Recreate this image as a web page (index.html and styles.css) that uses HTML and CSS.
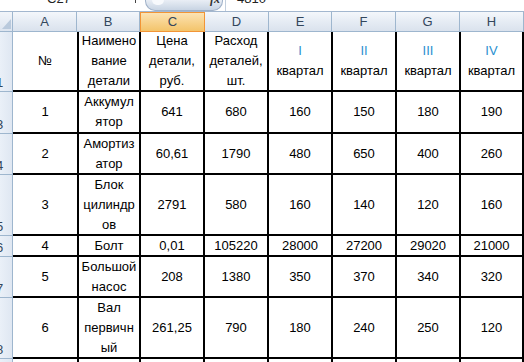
FILE: index.html
```html
<!DOCTYPE html>
<html lang="ru">
<head>
<meta charset="utf-8">
<title>Детали</title>
<link rel="stylesheet" href="styles.css">
</head>
<body>
<div class="topbar">
  <div class="namebox"><span class="cut">C27</span></div>
  <span class="tick"></span>
  <div class="fxpill"><span class="hl"></span><span class="fx">fx</span></div>
  <div class="value"><span class="cut">4810</span></div>
</div>
<div class="colheads">
  <div class="corner"><span class="tri"></span></div>
  <div class="ch w64">A</div>
  <div class="ch w63">B</div>
  <div class="ch w65 sel">C</div>
  <div class="ch w64">D</div>
  <div class="ch w63">E</div>
  <div class="ch w64">F</div>
  <div class="ch w64">G</div>
  <div class="ch w64">H</div>
</div>
<div class="sheet">
  <div class="rowheads">
    <div class="rh r60"><span>1</span></div>
    <div class="rh r42"><span>3</span></div>
    <div class="rh r41"><span>4</span></div>
    <div class="rh r61"><span>5</span></div>
    <div class="rh r21"><span>6</span></div>
    <div class="rh r41"><span>7</span></div>
    <div class="rh r61"><span>8</span></div>
    <div class="rh r20"><span></span></div>
  </div>
  <div class="grid">
    <div class="c">№</div>
    <div class="c">Наимено<br>вание<br>детали</div>
    <div class="c">Цена<br>детали,<br>руб.</div>
    <div class="c">Расход<br>деталей,<br>шт.</div>
    <div class="c"><span class="q">I</span>квартал</div>
    <div class="c"><span class="q">II</span>квартал</div>
    <div class="c"><span class="q">III</span>квартал</div>
    <div class="c"><span class="q">IV</span>квартал</div>

    <div class="c">1</div>
    <div class="c">Аккумул<br>ятор</div>
    <div class="c">641</div>
    <div class="c">680</div>
    <div class="c">160</div>
    <div class="c">150</div>
    <div class="c">180</div>
    <div class="c">190</div>

    <div class="c">2</div>
    <div class="c">Амортиз<br>атор</div>
    <div class="c">60,61</div>
    <div class="c">1790</div>
    <div class="c">480</div>
    <div class="c">650</div>
    <div class="c">400</div>
    <div class="c">260</div>

    <div class="c">3</div>
    <div class="c">Блок<br>цилиндр<br>ов</div>
    <div class="c">2791</div>
    <div class="c">580</div>
    <div class="c">160</div>
    <div class="c">140</div>
    <div class="c">120</div>
    <div class="c">160</div>

    <div class="c">4</div>
    <div class="c">Болт</div>
    <div class="c">0,01</div>
    <div class="c">105220</div>
    <div class="c">28000</div>
    <div class="c">27200</div>
    <div class="c">29020</div>
    <div class="c">21000</div>

    <div class="c">5</div>
    <div class="c">Большой<br>насос</div>
    <div class="c">208</div>
    <div class="c">1380</div>
    <div class="c">350</div>
    <div class="c">370</div>
    <div class="c">340</div>
    <div class="c">320</div>

    <div class="c">6</div>
    <div class="c">Вал<br>первичн<br>ый</div>
    <div class="c">261,25</div>
    <div class="c">790</div>
    <div class="c">180</div>
    <div class="c">240</div>
    <div class="c">250</div>
    <div class="c">120</div>

    <div class="c"></div>
    <div class="c"></div>
    <div class="c"></div>
    <div class="c"></div>
    <div class="c"></div>
    <div class="c"></div>
    <div class="c"></div>
    <div class="c"></div>
  </div>
</div>
</body>
</html>
```
FILE: styles.css
```css
body {
  margin: 0;
  width: 524px;
  height: 362px;
  overflow: hidden;
  background: #fff;
  font-family: "Liberation Sans", Arial, sans-serif;
  font-size: 13px;
  color: #000;
}

/* formula bar (cut off at the top) */
.topbar {
  display: flex;
  height: 11px;
  border-bottom: 1px solid #a3b7cf;
  overflow: hidden;
  color: #222;
}
.namebox {
  width: 135px;
  padding-left: 47px;
  box-sizing: border-box;
}
.cut {
  display: block;
  line-height: 13px;
  margin-top: -8px;
}
.tick {
  width: 1px;
  height: 3px;
  background: #444;
}
.fxpill {
  margin-left: 9px;
  width: 78px;
  height: 11px;
  box-sizing: border-box;
  border: 1px solid #9fb1c8;
  border-top: none;
  border-radius: 0 0 10px 10px;
  background: linear-gradient(#e9eef5, #c8d4e3);
  display: flex;
  align-items: flex-start;
  padding: 0 2px 0 6px;
}
.hl {
  width: 12px;
  height: 5px;
  border-radius: 0 0 6px 6px;
  background: #f7f9fc;
  margin-right: auto;
}
.fx {
  font-family: "Liberation Serif", serif;
  font-style: italic;
  font-weight: bold;
  font-size: 12px;
  line-height: 12px;
  margin-top: -7px;
  color: #333;
}
.value {
  margin-left: 2px;
  border-left: 1px solid #c3cfdd;
  padding-left: 11px;
}

/* column headings */
.colheads {
  display: flex;
  height: 20px;
}
.corner {
  width: 13px;
  box-sizing: border-box;
  border-right: 1px solid #9eb6ce;
  border-bottom: 1px solid #9eb6ce;
  background: linear-gradient(#f2f5fa, #dce4ef);
  display: flex;
  align-items: flex-end;
  justify-content: flex-end;
  padding: 0 1px 2px 0;
}
.tri {
  width: 0;
  height: 0;
  border-left: 9px solid transparent;
  border-bottom: 10px solid #b9c9dc;
}
.ch {
  box-sizing: border-box;
  height: 20px;
  border-right: 1px solid #9eb6ce;
  border-bottom: 1px solid #9eb6ce;
  background: linear-gradient(#f4f7fb 0%, #e6ecf4 50%, #dae2ed 100%);
  color: #33465c;
  display: flex;
  align-items: center;
  justify-content: center;
  line-height: 18px;
}
.ch.sel {
  border: 1px solid #f29536;
  background: linear-gradient(#fbe3b4 0%, #f8d38e 50%, #f3c46b 100%);
}
.w63 { width: 63px; }
.w64 { width: 64px; }
.w65 { width: 65px; }

/* sheet body */
.sheet {
  display: flex;
}
.rowheads {
  width: 13px;
  overflow: hidden;
  box-sizing: border-box;
  border-right: 1px solid #9eb6ce;
  background: linear-gradient(to right, #eaf0f8, #dfe7f2);
  display: flex;
  flex-direction: column;
}
.rh {
  box-sizing: border-box;
  border-bottom: 1px solid #9eb6ce;
  display: flex;
  align-items: flex-end;
  color: #33465c;
}
.rh span {
  margin-left: -4px;
  line-height: 16px;
}
.r60 { height: 60px; }
.r42 { height: 42px; }
.r41 { height: 41px; }
.r61 { height: 61px; }
.r21 { height: 21px; }
.r20 { height: 20px; border-bottom: none; }

.grid {
  display: grid;
  grid-template-columns: 64px 60px 62px 62px 62px 62px 62px 61px;
  grid-template-rows: 58px 40px 39px 59px 19px 39px 59px 20px;
  gap: 2px;
  background: #000;
  border-right: 2px solid #000;
}
.c {
  background: #fff;
  overflow: hidden;
  white-space: nowrap;
  display: flex;
  flex-direction: column;
  align-items: center;
  justify-content: center;
  text-align: center;
  line-height: 20px;
}
.q {
  color: #2a8fd0;
}
```
